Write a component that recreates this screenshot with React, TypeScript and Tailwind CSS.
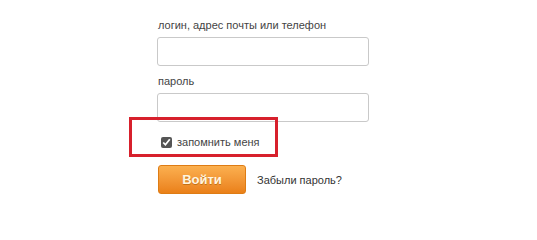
export default function App() {
    return (
        <div className="relative w-[537px] h-[227px] bg-white font-['Liberation_Sans',Arial,sans-serif] text-[11px] text-[#444]">
            <div className="pl-[157px] pt-[18px] w-[370px]">
                <div className="leading-[14px] pl-[1px]">логин, адрес почты или телефон</div>
                <input
                    type="text"
                    className="mt-[5px] block w-[212px] h-[29px] border border-[#c9c9c9] rounded-[3px] bg-white outline-none px-2"
                />
                <div className="mt-[8px] leading-[14px] pl-[1px]">пароль</div>
                <input
                    type="password"
                    className="mt-[5px] block w-[212px] h-[29px] border border-[#c9c9c9] rounded-[3px] bg-white outline-none px-2"
                />
                <label className="mt-[14px] ml-[4px] flex items-center gap-[5px] h-[12px] leading-[12px]">
                    <input type="checkbox" defaultChecked className="m-0 w-[11px] h-[11px] accent-[#555]" />
                    <span>запомнить меня</span>
                </label>
                <div className="mt-[17px] flex items-center gap-[11px]">
                    <button className="w-[88px] h-[29px] rounded-[3px] border border-[#de7c14] bg-gradient-to-b from-[#fbb04f] to-[#ea8017] text-[#fff6e0] font-bold text-[13px] [text-shadow:0_1px_0_rgba(150,80,0,0.5)] ml-[1px]">
                        Войти
                    </button>
                    <span className="text-[#333] pt-[2px]">Забыли пароль?</span>
                </div>
            </div>
            {/* red highlight box */}
            <div className="absolute left-[129px] top-[117px] w-[149px] h-[40px] border-[3px] border-[#d7202c]" />
        </div>
    );
}
